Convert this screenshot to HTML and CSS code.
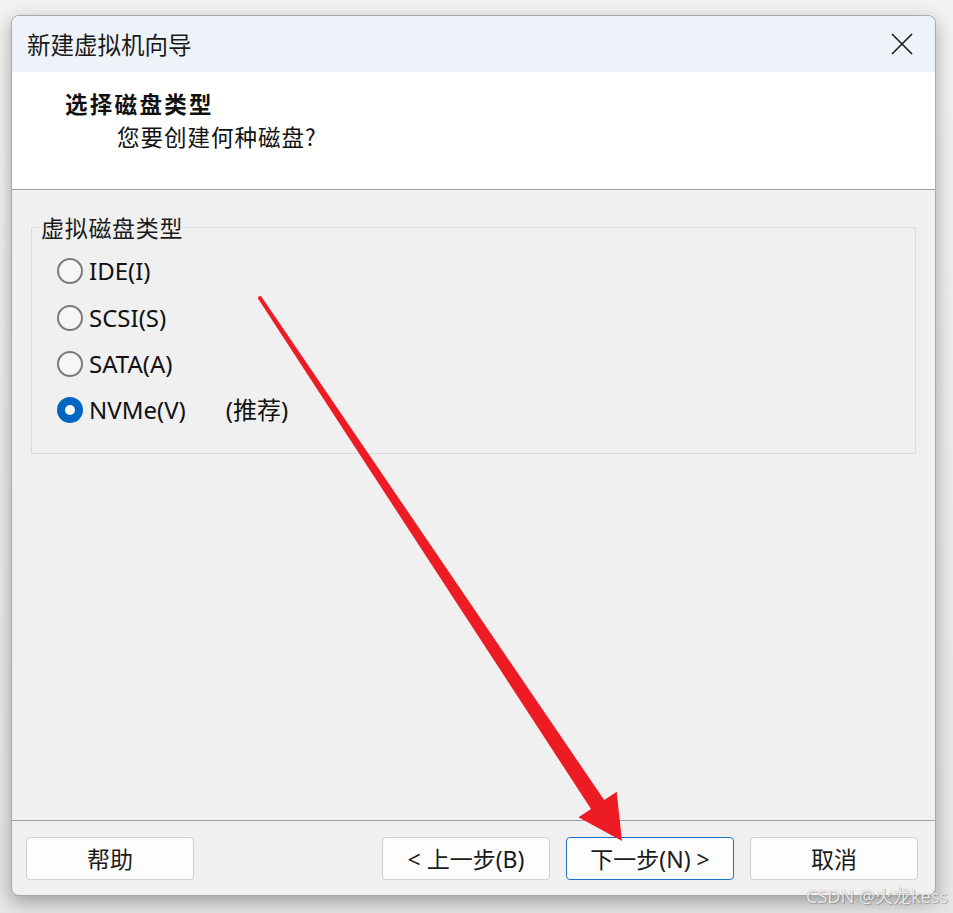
FILE: index.html
```html
<!DOCTYPE html>
<html lang="zh-CN">
<head>
<meta charset="utf-8">
<title>新建虚拟机向导</title>
<link rel="stylesheet" href="styles.css">
</head>
<body>
<div class="window">
  <div class="titlebar">
    <span class="title">新建虚拟机向导</span>
    <svg class="close" width="22" height="22" viewBox="0 0 22 22"><path d="M1 1 L21 21 M21 1 L1 21" stroke="#1a1a1a" stroke-width="1.6" fill="none"/></svg>
  </div>
  <div class="header">
    <div class="heading">选择磁盘类型</div>
    <div class="subheading">您要创建何种磁盘?</div>
  </div>
  <div class="content">
    <fieldset class="group">
      <legend class="group-label">虚拟磁盘类型</legend>
      <div class="option"><span class="radio"></span><span class="label">IDE(I)</span></div>
      <div class="option"><span class="radio"></span><span class="label">SCSI(S)</span></div>
      <div class="option"><span class="radio"></span><span class="label">SATA(A)</span></div>
      <div class="option"><span class="radio checked"></span><span class="label">NVMe(V)</span><span class="note">(推荐)</span></div>
    </fieldset>
  </div>
  <div class="footer">
    <button class="btn">帮助</button>
    <div class="spacer"></div>
    <button class="btn">&lt; 上一步(B)</button>
    <button class="btn primary">下一步(N) &gt;</button>
    <button class="btn">取消</button>
  </div>
</div>
<svg class="arrow" width="953" height="913" viewBox="0 0 953 913">
  <polygon fill="#ed1c24" points="261.7,296.9 604.2,800 616.7,791.7 622,841 578.5,817.2 591,808.9 258.3,299.1"/>
  <circle cx="260" cy="298" r="2" fill="#ed1c24"/>
</svg>
<div class="watermark">CSDN @火龙kess</div>
</body>
</html>
```
FILE: styles.css
```css
html, body {
  margin: 0;
  padding: 0;
}
body {
  width: 953px;
  height: 913px;
  overflow: hidden;
  background: linear-gradient(to bottom, #f2f2f2 0%, #e6e6e6 100%);
  font-family: "Noto Sans", "Noto Sans CJK SC", sans-serif;
  color: #1a1a1a;
  position: relative;
}
.window {
  box-sizing: border-box;
  margin: 15px 0 0 11px;
  width: 925px;
  height: 881px;
  border: 1px solid #a9a9a9;
  border-radius: 8px;
  background: #f0f0f0;
  box-shadow: 0 6px 18px rgba(0, 0, 0, 0.32);
  display: flex;
  flex-direction: column;
  overflow: hidden;
}
.titlebar {
  height: 56px;
  flex: none;
  background: #eef3f9;
  display: flex;
  align-items: center;
  justify-content: space-between;
  padding: 0 22px 0 15px;
}
.title {
  font-family: "Noto Sans CJK SC", sans-serif;
  font-size: 23.5px;
  line-height: 28px;
  color: #1a1a1a;
}
.header {
  flex: none;
  height: 118px;
  box-sizing: border-box;
  background: #ffffff;
  border-bottom: 1px solid #a0a0a0;
  padding-top: 16px;
}
.heading {
  font-family: "Noto Sans CJK SC", sans-serif;
  font-weight: 700;
  font-size: 22.5px;
  letter-spacing: 2.3px;
  line-height: 30px;
  padding-left: 53px;
  color: #111;
}
.subheading {
  font-family: "Noto Sans CJK SC", sans-serif;
  font-size: 22.5px;
  letter-spacing: 1px;
  line-height: 30px;
  padding-left: 105px;
  margin-top: 3px;
  color: #111;
}
.content {
  flex: 1;
  padding: 23px 19px 0 19px;
}
.group {
  margin: 0;
  padding: 7px 0 19px 25px;
  border: 1px solid #dcdcdc;
  min-width: 0;
}
.group-label {
  font-family: "Noto Sans CJK SC", sans-serif;
  font-size: 23px;
  letter-spacing: 0.7px;
  line-height: 28px;
  padding: 0 2px;
  margin-left: -18px;
  color: #1a1a1a;
}
.option {
  height: 46.4px;
  display: flex;
  align-items: center;
}
.radio {
  box-sizing: border-box;
  width: 26px;
  height: 26px;
  border-radius: 50%;
  border: 2px solid #7a7a7a;
  background: #f6f6f6;
  flex: none;
  margin-right: 6px;
  display: flex;
  align-items: center;
  justify-content: center;
}
.radio.checked {
  border: none;
  background: #0067c0;
}
.radio.checked::after {
  content: "";
  width: 10px;
  height: 10px;
  border-radius: 50%;
  background: #ffffff;
}
.label {
  font-size: 24px;
  line-height: 30px;
  color: #111;
}
.note {
  font-family: "Noto Sans", "Noto Sans CJK SC", sans-serif;
  font-size: 24px;
  line-height: 30px;
  margin-left: 40px;
  color: #111;
}
.footer {
  flex: none;
  border-top: 1px solid #a0a0a0;
  display: flex;
  gap: 16px;
  padding: 16px 17px 15px 14px;
}
.spacer {
  flex: 1;
}
.btn {
  box-sizing: border-box;
  width: 168px;
  height: 43px;
  border: 1px solid #d0d0d0;
  border-radius: 4px;
  background: #fdfdfd;
  font-family: "Noto Sans", "Noto Sans CJK SC", sans-serif;
  font-size: 23px;
  color: #1a1a1a;
  padding: 0;
  line-height: 30px;
}
.btn.primary {
  border: 1px solid #1a73c8;
}
.arrow {
  position: absolute;
  left: 0;
  top: 0;
  pointer-events: none;
}
.watermark {
  position: absolute;
  right: 5px;
  bottom: 6px;
  font-family: "Noto Sans", "Noto Sans CJK SC", sans-serif;
  font-size: 18px;
  line-height: 22px;
  color: rgba(255, 255, 255, 0.85);
  text-shadow: 0 0 1px rgba(0, 0, 0, 0.35), 1px 1px 1px rgba(0, 0, 0, 0.2);
}
```
